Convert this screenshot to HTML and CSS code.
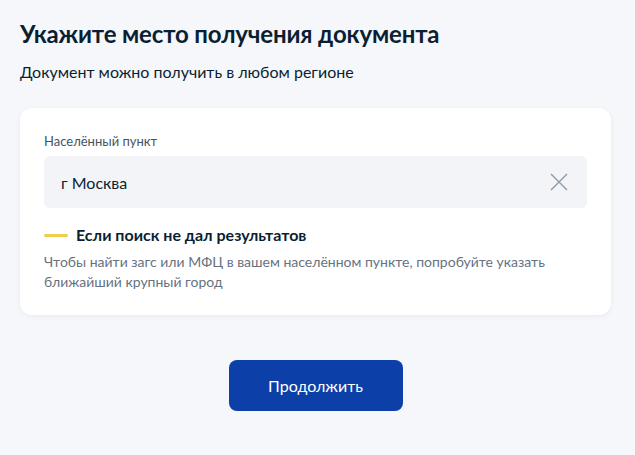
FILE: index.html
```html
<!DOCTYPE html>
<html lang="ru">
<head>
    <meta charset="UTF-8">
    <meta name="viewport" content="width=device-width, initial-scale=1.0">
    <title>Место получения документа</title>
    <link rel="stylesheet" href="styles.css">
</head>
<body>
    <div class="page">
        <h1 class="title">Укажите место получения документа</h1>
        <p class="subtitle">Документ можно получить в любом регионе</p>

        <div class="card">
            <label class="field-label" for="city">Населённый пункт</label>
            <div class="field">
                <input type="text" id="city" value="г Москва">
                <span class="clear">
                    <svg width="18" height="18" viewBox="0 0 18 18">
                        <path d="M1 1 L17 17 M17 1 L1 17" stroke="#8f9aa6" stroke-width="1.4" fill="none"/>
                    </svg>
                </span>
            </div>

            <div class="hint-title">
                <span class="hint-bar"></span>
                Если поиск не дал результатов
            </div>
            <p class="hint-text">Чтобы найти загс или МФЦ в вашем населённом пункте, попробуйте указать ближайший крупный город</p>
        </div>

        <div class="actions">
            <button type="button">Продолжить</button>
        </div>
    </div>
</body>
</html>
```

FILE: styles.css
```css
* {
    margin: 0;
    padding: 0;
    box-sizing: border-box;
    font-family: Lato, "Noto Sans", sans-serif;
}

body {
    background-color: #f5f7fa;
    color: #0b1f33;
}

.page {
    padding: 18px 24px 20px 20px;
}

.title {
    font-size: 24px;
    line-height: 32px;
    font-weight: 700;
    letter-spacing: -0.15px;
    color: #0b1f33;
}

.subtitle {
    margin-top: 11px;
    font-size: 16px;
    line-height: 22px;
    color: #0b1f33;
}

.card {
    margin-top: 25px;
    background: #fff;
    border-radius: 12px;
    padding: 24px 24px 23px;
    box-shadow: 0 1px 4px rgba(60, 80, 110, 0.08);
}

.field-label {
    display: block;
    font-size: 13px;
    line-height: 18px;
    color: #46535f;
}

.field {
    position: relative;
    margin-top: 6px;
}

.field input {
    width: 100%;
    height: 52px;
    border: none;
    border-radius: 6px;
    background: #f2f4f7;
    padding: 0 50px 0 17px;
    font-size: 16px;
    color: #0b1f33;
    outline: none;
}

.clear {
    position: absolute;
    right: 19px;
    top: 17px;
    width: 18px;
    height: 18px;
}

.hint-title {
    display: flex;
    align-items: center;
    margin-top: 16px;
    font-size: 16px;
    line-height: 22px;
    font-weight: 700;
}

.hint-bar {
    width: 24px;
    height: 3px;
    border-radius: 2px;
    background: #f1ce4e;
    margin-right: 8px;
}

.hint-text {
    margin-top: 6px;
    font-size: 14px;
    line-height: 20px;
    color: #66727f;
}

.actions {
    display: flex;
    justify-content: center;
    margin-top: 45px;
}

button {
    width: 174px;
    height: 51px;
    border: none;
    border-radius: 8px;
    background: #0d3fa8;
    color: #fff;
    font-size: 16px;
    cursor: pointer;
}
```
